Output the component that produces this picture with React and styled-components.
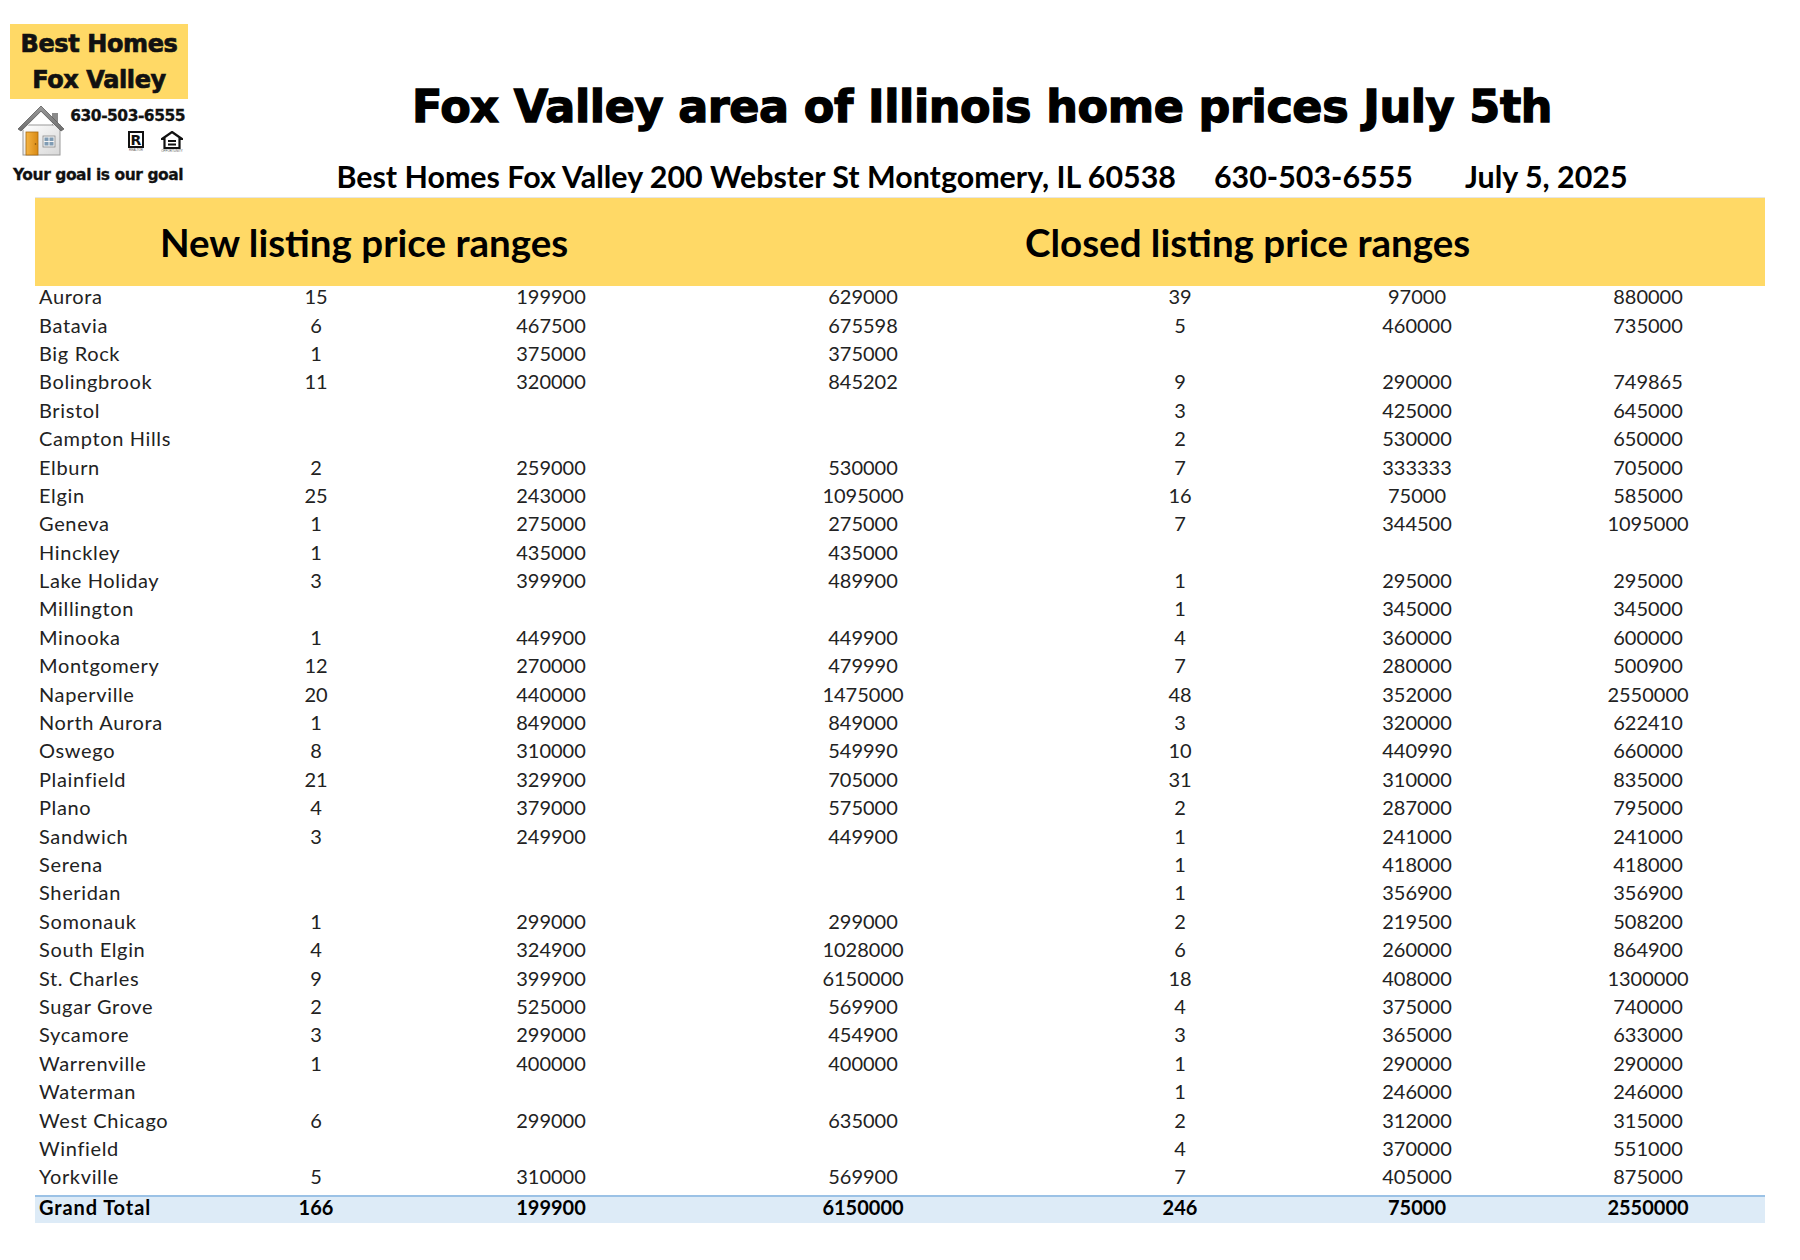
import React from "react";
import styled, { createGlobalStyle } from "styled-components";

const GlobalStyle = createGlobalStyle`
  html, body { margin: 0; padding: 0; background: #ffffff; }
  body { font-family: Lato, "Open Sans", sans-serif; color: #222222; }
`;

const rows = [
  ["Aurora", "15", "199900", "629000", "39", "97000", "880000"],
  ["Batavia", "6", "467500", "675598", "5", "460000", "735000"],
  ["Big Rock", "1", "375000", "375000", "", "", ""],
  ["Bolingbrook", "11", "320000", "845202", "9", "290000", "749865"],
  ["Bristol", "", "", "", "3", "425000", "645000"],
  ["Campton Hills", "", "", "", "2", "530000", "650000"],
  ["Elburn", "2", "259000", "530000", "7", "333333", "705000"],
  ["Elgin", "25", "243000", "1095000", "16", "75000", "585000"],
  ["Geneva", "1", "275000", "275000", "7", "344500", "1095000"],
  ["Hinckley", "1", "435000", "435000", "", "", ""],
  ["Lake Holiday", "3", "399900", "489900", "1", "295000", "295000"],
  ["Millington", "", "", "", "1", "345000", "345000"],
  ["Minooka", "1", "449900", "449900", "4", "360000", "600000"],
  ["Montgomery", "12", "270000", "479990", "7", "280000", "500900"],
  ["Naperville", "20", "440000", "1475000", "48", "352000", "2550000"],
  ["North Aurora", "1", "849000", "849000", "3", "320000", "622410"],
  ["Oswego", "8", "310000", "549990", "10", "440990", "660000"],
  ["Plainfield", "21", "329900", "705000", "31", "310000", "835000"],
  ["Plano", "4", "379000", "575000", "2", "287000", "795000"],
  ["Sandwich", "3", "249900", "449900", "1", "241000", "241000"],
  ["Serena", "", "", "", "1", "418000", "418000"],
  ["Sheridan", "", "", "", "1", "356900", "356900"],
  ["Somonauk", "1", "299000", "299000", "2", "219500", "508200"],
  ["South Elgin", "4", "324900", "1028000", "6", "260000", "864900"],
  ["St. Charles", "9", "399900", "6150000", "18", "408000", "1300000"],
  ["Sugar Grove", "2", "525000", "569900", "4", "375000", "740000"],
  ["Sycamore", "3", "299000", "454900", "3", "365000", "633000"],
  ["Warrenville", "1", "400000", "400000", "1", "290000", "290000"],
  ["Waterman", "", "", "", "1", "246000", "246000"],
  ["West Chicago", "6", "299000", "635000", "2", "312000", "315000"],
  ["Winfield", "", "", "", "4", "370000", "551000"],
  ["Yorkville", "5", "310000", "569900", "7", "405000", "875000"],
];
const total = ["Grand Total", "166", "199900", "6150000", "246", "75000", "2550000"];

const Page = styled.div`
  width: 1800px;
  height: 1260px;
  box-sizing: border-box;
  padding-top: 24px;
`;

const Header = styled.header`
  display: flex;
  align-items: flex-start;
  height: 173px;
`;

const Logo = styled.div`
  width: 178px;
  margin-left: 10px;
  display: flex;
  flex-direction: column;
`;

const LogoBox = styled.div`
  height: 75px;
  background: #ffd966;
  display: flex;
  flex-direction: column;
  align-items: center;
  justify-content: center;
  font-family: "DejaVu Sans", sans-serif;
  font-weight: 700;
  font-size: 24px;
  line-height: 36px;
  color: #111111;
  letter-spacing: -0.4px;
  -webkit-text-stroke: 0.7px #111111;
`;

const LogoMid = styled.div`
  display: flex;
  align-items: flex-start;
  padding: 6px 0 0 7px;
  height: 54px;
  box-sizing: border-box;
`;

const LogoRight = styled.div`
  display: flex;
  flex-direction: column;
  align-items: flex-end;
  flex: 1;
  padding-right: 3px;
`;

const Phone = styled.div`
  font-family: "DejaVu Sans", sans-serif;
  font-weight: 700;
  font-size: 15.5px;
  letter-spacing: -0.5px;
  color: #111111;
  line-height: 16px;
  margin-top: 3px;
  -webkit-text-stroke: 0.3px #111111;
`;

const Badges = styled.div`
  display: flex;
  gap: 17px;
  margin-top: 7px;
  padding-right: 2px;
`;

const Badge = styled.div`
  display: flex;
  flex-direction: column;
  align-items: center;
  gap: 1px;
`;

const BadgeCaption = styled.span`
  font-family: "Liberation Sans", sans-serif;
  font-size: 3px;
  line-height: 3px;
  color: #555555;
`;

const RealtorMark = styled.div`
  width: 16px;
  height: 17px;
  border: 2px solid #111111;
  box-sizing: border-box;
  display: flex;
  align-items: center;
  justify-content: center;
  font-family: "DejaVu Sans", sans-serif;
  font-weight: 700;
  font-size: 14px;
  line-height: 1;
  color: #111111;
`;

const Tagline = styled.div`
  font-family: "DejaVu Sans", sans-serif;
  font-weight: 700;
  font-size: 15.5px;
  letter-spacing: -0.45px;
  color: #111111;
  margin-top: 13px;
  padding-left: 3px;
  white-space: nowrap;
  -webkit-text-stroke: 0.3px #111111;
`;

const TitleCol = styled.div`
  flex: 1;
  margin-right: 24px;
  display: flex;
  flex-direction: column;
  align-items: center;
`;

const Title = styled.h1`
  margin: 55px 0 0 0;
  font-family: "DejaVu Sans", sans-serif;
  font-weight: 700;
  font-size: 44.5px;
  line-height: 56px;
  color: #000000;
  letter-spacing: -0.4px;
  white-space: nowrap;
  -webkit-text-stroke: 1.3px #000000;
`;

const Subtitle = styled.div`
  display: flex;
  gap: 38px;
  margin-top: 24px;
  font-family: Lato, sans-serif;
  font-weight: 700;
  font-size: 30.4px;
  line-height: 34px;
  color: #000000;
  white-space: nowrap;
`;

const SubPart = styled.span`
  margin-left: ${(p) => p.$extra || 0}px;
`;

const Table = styled.div`
  margin-left: 35px;
  width: 1730px;
`;

const Band = styled.div`
  height: 89px;
  background: #ffd966;
  border-top: 1px solid #e6e6e6;
  display: flex;
  align-items: center;
  box-sizing: border-box;
`;

const BandTitle = styled.h2`
  margin: 0;
  font-family: Lato, sans-serif;
  font-weight: 700;
  font-size: 38.5px;
  color: #000000;
  width: ${(p) => p.$width || "auto"};
  padding-left: ${(p) => p.$pad || 0}px;
  box-sizing: border-box;
  white-space: nowrap;
`;

const Row = styled.div`
  display: grid;
  grid-template-columns: 164px 234px 236px 388px 246px 228px 234px;
  height: ${(p) => (p.$total ? "28px" : "28.4px")};
  padding-bottom: ${(p) => (p.$total ? "6px" : "8px")};
  align-items: center;
  font-family: Lato, sans-serif;
  font-size: 20px;
  line-height: 20px;
  font-weight: ${(p) => (p.$total ? 700 : 400)};
  color: ${(p) => (p.$total ? "#000000" : "#222222")};
  background: ${(p) => (p.$total ? "#ddebf7" : "transparent")};
  border-top: ${(p) => (p.$total ? "2px solid #9bc2e6" : "none")};
  box-sizing: border-box;
`;

const Cell = styled.div`
  text-align: ${(p) => (p.$name ? "left" : "center")};
  padding-left: ${(p) => (p.$name ? "4px" : "0")};
  letter-spacing: ${(p) => (p.$name ? (p.$bold ? "0.9px" : "0.65px") : "0")};
  white-space: nowrap;
`;

const House = () => (
  <svg width="48" height="52" viewBox="0 0 48 52">
    <defs>
      <linearGradient id="roof" x1="0" y1="0" x2="0" y2="1">
        <stop offset="0" stopColor="#9a9a9a" />
        <stop offset="1" stopColor="#6e6e6e" />
      </linearGradient>
      <linearGradient id="wall" x1="0" y1="0" x2="1" y2="1">
        <stop offset="0" stopColor="#ffffff" />
        <stop offset="1" stopColor="#d8d8d8" />
      </linearGradient>
      <linearGradient id="door" x1="0" y1="0" x2="1" y2="0">
        <stop offset="0" stopColor="#f5b443" />
        <stop offset="1" stopColor="#d98a14" />
      </linearGradient>
    </defs>
    <rect x="35" y="8" width="6" height="12" fill="#8a8a8a" />
    <rect x="6" y="20" width="37" height="30" fill="url(#wall)" stroke="#9a9a9a" strokeWidth="1" />
    <path d="M1 24 L24 1 L47 24 L44 26 L24 6 L4 26 Z" fill="url(#roof)" stroke="#5e5e5e" strokeWidth="0.8" />
    <path d="M6 25 L24 7 L42 25" fill="none" stroke="#e8e8e8" strokeWidth="1" />
    <rect x="9" y="27" width="12" height="23" fill="url(#door)" stroke="#a86a10" strokeWidth="0.8" />
    <circle cx="18.5" cy="39" r="0.8" fill="#7a4a08" />
    <rect x="26" y="31" width="12" height="11" fill="#f2f2f2" stroke="#8a8a8a" strokeWidth="0.8" />
    <rect x="27.5" y="32.5" width="4" height="3.5" fill="#7f9bb3" />
    <rect x="32.5" y="32.5" width="4" height="3.5" fill="#7f9bb3" />
    <rect x="27.5" y="37" width="4" height="3.5" fill="#7f9bb3" />
    <rect x="32.5" y="37" width="4" height="3.5" fill="#7f9bb3" />
  </svg>
);

const EqualHousing = () => (
  <svg width="22" height="18" viewBox="0 0 22 18">
    <path d="M11 1 L21 8 L18.5 8 L18.5 17 L3.5 17 L3.5 8 L1 8 Z" fill="none" stroke="#111" strokeWidth="2.2" strokeLinejoin="miter" />
    <rect x="7" y="9" width="8" height="2" fill="#111" />
    <rect x="7" y="12.5" width="8" height="2" fill="#111" />
  </svg>
);

export default function App() {
  return (
    <>
      <GlobalStyle />
      <Page>
        <Header>
          <Logo>
            <LogoBox>
              <span>Best Homes</span>
              <span>Fox Valley</span>
            </LogoBox>
            <LogoMid>
              <House />
              <LogoRight>
                <Phone>630-503-6555</Phone>
                <Badges>
                  <Badge>
                    <RealtorMark>R</RealtorMark>
                    <BadgeCaption>REALTOR</BadgeCaption>
                  </Badge>
                  <Badge>
                    <EqualHousing />
                    <BadgeCaption>OPPORTUNITY</BadgeCaption>
                  </Badge>
                </Badges>
              </LogoRight>
            </LogoMid>
            <Tagline>Your goal is our goal</Tagline>
          </Logo>
          <TitleCol>
            <Title>Fox Valley area of Illinois home prices July 5th</Title>
            <Subtitle>
              <SubPart>Best Homes Fox Valley 200 Webster St Montgomery, IL 60538</SubPart>
              <SubPart>630-503-6555</SubPart>
              <SubPart $extra={14}>July 5, 2025</SubPart>
            </Subtitle>
          </TitleCol>
        </Header>
        <Table>
          <Band>
            <BandTitle $width="990px" $pad={125}>New listing price ranges</BandTitle>
            <BandTitle>Closed listing price ranges</BandTitle>
          </Band>
          {rows.map((r) => (
            <Row key={r[0]}>
              {r.map((c, i) => (
                <Cell key={i} $name={i === 0}>{c}</Cell>
              ))}
            </Row>
          ))}
          <Row $total>
            {total.map((c, i) => (
              <Cell key={i} $name={i === 0} $bold>{c}</Cell>
            ))}
          </Row>
        </Table>
      </Page>
    </>
  );
}
